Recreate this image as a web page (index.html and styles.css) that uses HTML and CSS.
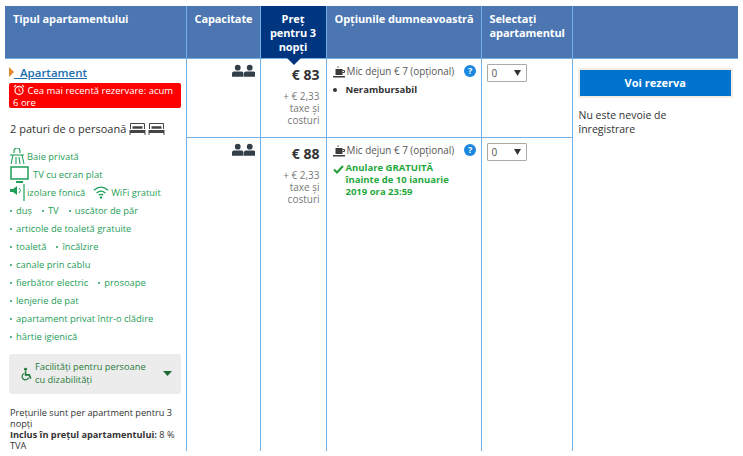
FILE: index.html
```html
<!DOCTYPE html>
<html lang="ro">
<head>
<meta charset="utf-8">
<title>Apartament</title>
<link rel="stylesheet" href="styles.css">
</head>
<body>
<table class="rooms">
<colgroup><col class="c1"><col class="c2"><col class="c3"><col class="c4"><col class="c5"><col class="c6"></colgroup>
<thead>
<tr>
<th>Tipul apartamentului</th>
<th>Capacitate</th>
<th class="th-price">Preţ pentru 3 nopţi<svg class="notch" width="14" height="7" viewBox="0 0 14 7"><path d="M0 0h14L7 7z" fill="#003580"/></svg></th>
<th class="nowrap">Opțiunile dumneavoastră</th>
<th>Selectaţi apartamentul</th>
<th></th>
</tr>
</thead>
<tbody>
<tr class="row1">
<td rowspan="2" class="room">
<div class="title"><svg class="arrow" width="5" height="10" viewBox="0 0 5 10"><path d="M0 0l5 5-5 5z" fill="#e08a2c"/></svg><a href="#">&nbsp;&nbsp;Apartament</a></div>
<div class="urgent"><svg class="clock" width="12" height="12" viewBox="0 0 12 12"><circle cx="6" cy="6.500" r="4" fill="none" stroke="#ffd9d0" stroke-width="1.400"/><path d="M6 4.500v2.200l1.500.8" fill="none" stroke="#ffd9d0"/><path d="M1 3l2-2M11 3L9 1" stroke="#ffd9d0" stroke-width="1.300"/></svg> Cea mai recentă rezervare: acum 6 ore</div>
<div class="beds">2 paturi de o persoană <svg width="37" height="13" viewBox="0 0 37 13"><g id="b" fill="none" stroke="#444"><path d="M1.500 7V1.500h14V7"/><path d="M.5 9.500h16" stroke-width="3"/><path d="M3.500 5.500h10" stroke-width="2.500"/><path d="M1 11v2M16 11v2"/></g><use href="#b" x="19"/></svg></div>
<div class="facility"><svg class="ic-bath" width="15" height="17" viewBox="0 0 15 17"><g fill="none" stroke="#1f9e5a" stroke-width="1.100"><path d="M4 5V3a3 3 0 0 1 6 0v2"/><path d="M0 7h14"/><path d="M3 7L1 16M6 9v7M9 9l1 7M12 7l2 9"/></g></svg> Baie privată</div>
<div class="facility"><svg width="21" height="17" viewBox="0 0 21 17"><path d="M1 1h17v12H1z" fill="none" stroke="#1f9e5a" stroke-width="1.500"/><path d="M6 16h7" stroke="#1f9e5a" stroke-width="2"/></svg> TV cu ecran plat</div>
<div class="facility"><svg width="15" height="17" viewBox="0 0 15 17"><path d="M0 5h3l4-3v9L3 8H0z" fill="#1f9e5a"/><path d="M9 4l1.500 2.500L9 9" fill="none" stroke="#1f9e5a"/><path d="M14 0v17" stroke="#1f9e5a" stroke-width="1.200"/></svg> izolare fonică <svg class="wifi" width="16" height="15" viewBox="0 0 18 15"><g fill="none" stroke="#1f9e5a" stroke-width="1.500"><path d="M1 5c5-4.500 11-4.500 16 0"/><path d="M4 8c3-2.500 7-2.500 10 0"/><path d="M6.500 10.500c1.500-1 3.500-1 5 0"/></g><circle cx="9" cy="13" r="1.400" fill="#1f9e5a"/></svg> WiFi gratuit</div>
<div class="facility small"><span>duş</span><span>TV</span><span>uscător de păr</span></div>
<div class="facility small"><span>articole de toaletă gratuite</span></div>
<div class="facility small"><span>toaletă</span><span>încălzire</span></div>
<div class="facility small"><span>canale prin cablu</span></div>
<div class="facility small"><span>fierbător electric</span><span>prosoape</span></div>
<div class="facility small"><span>lenjerie de pat</span></div>
<div class="facility small"><span>apartament privat într-o clădire</span></div>
<div class="facility small"><span>hârtie igienică</span></div>
<div class="access"><svg class="wheel" width="13" height="14" viewBox="0 0 14 14"><circle cx="6" cy="1.800" r="1.600" fill="#1f7a3a"/><path d="M6 4v4h4l1.500 4" fill="none" stroke="#1f7a3a" stroke-width="1.800"/><path d="M4.200 6.500a3.600 3.600 0 1 0 5 4.500" fill="none" stroke="#1f7a3a" stroke-width="1.300"/></svg><span class="access-text">Facilităţi pentru persoane cu dizabilităţi</span><svg width="9" height="5" viewBox="0 0 9 5"><path d="M0 0h9L4.500 5z" fill="#1a6b2f"/></svg></div>
<p class="note">Preţurile sunt per apartment pentru 3 nopţi<br><b>Inclus în preţul apartamentului:</b> 8 % TVA</p>
</td>
<td class="cap"><svg width="23" height="13" viewBox="0 0 24 13"><g id="p" fill="#333f48"><circle cx="6" cy="3.500" r="3"/><path d="M0 13V9.500Q0 7.500 2 7.500h8Q12 7.500 12 9.500V13z"/></g><use href="#p" x="12.500"/></svg></td>
<td class="price"><div class="amount">€ 83</div><div class="tax">+ € 2,33 taxe şi costuri</div></td>
<td class="opt">
<div class="meal"><svg class="cup" width="12" height="13" viewBox="0 0 12 13"><path d="M2.500 4h7v6h-7z" fill="#3b3b3b"/><path d="M9.500 5.500h2v2h-2" fill="none" stroke="#3b3b3b"/><path d="M0 11h12v1.500H0z" fill="#3b3b3b"/><path d="M5 1v2" stroke="#8a6a45"/></svg><span>Mic dejun € 7 (opțional)</span><i class="help">?</i></div>
<div class="cond"><span class="dot"></span><b>Nerambursabil</b></div>
</td>
<td class="sel"><div class="select"><span>0</span><svg width="7" height="6" viewBox="0 0 7 6"><path d="M0 0h7L3.500 6z" fill="#333"/></svg></div></td>
<td rowspan="2" class="book">
<a class="btn" href="#">Voi rezerva</a>
<p>Nu este nevoie de înregistrare</p>
</td>
</tr>
<tr class="row2">
<td class="cap"><svg width="23" height="13" viewBox="0 0 24 13"><use href="#p"/><use href="#p" x="12.500"/></svg></td>
<td class="price"><div class="amount">€ 88</div><div class="tax">+ € 2,33 taxe şi costuri</div></td>
<td class="opt">
<div class="meal"><svg class="cup" width="12" height="13" viewBox="0 0 12 13"><path d="M2.500 4h7v6h-7z" fill="#3b3b3b"/><path d="M9.500 5.500h2v2h-2" fill="none" stroke="#3b3b3b"/><path d="M0 11h12v1.500H0z" fill="#3b3b3b"/><path d="M5 1v2" stroke="#8a6a45"/></svg><span>Mic dejun € 7 (opțional)</span><i class="help">?</i></div>
<div class="cond free"><svg class="check" width="11" height="9" viewBox="0 0 11 9"><path d="M1 4.500l3 3L10 1" fill="none" stroke="#1f9e3a" stroke-width="2"/></svg><b>Anulare GRATUITĂ înainte de 10 ianuarie 2019 ora 23:59</b></div>
</td>
<td class="sel"><div class="select"><span>0</span><svg width="7" height="6" viewBox="0 0 7 6"><path d="M0 0h7L3.500 6z" fill="#333"/></svg></div></td>
</tr>
</tbody>
</table>
</body>
</html>
```
FILE: styles.css
```css
html, body { margin: 0; padding: 0; background: #fff; overflow: hidden; }
body { height: 456px; padding: 6px 0 0 5px; box-sizing: border-box; font-family: "Open Sans", "Noto Sans", sans-serif; font-size: 10px; color: #333; }
.rooms { border-collapse: collapse; table-layout: fixed; width: 733px; }
.c1 { width: 181px; } .c2 { width: 74px; } .c3 { width: 66px; } .c4 { width: 155px; } .c5 { width: 91px; } .c6 { width: 166px; }
th { background: #4b76b2; color: #fff; font-size: 11px; line-height: 14px; font-weight: 700; letter-spacing: -.1px; height: 52px; text-align: left; vertical-align: top; padding: 6px 8px 0; border-left: 1px solid #74b0e8; border-bottom: 1px solid #74b0e8; box-sizing: border-box; }
th:first-child { border-left: 0; }
th.nowrap { white-space: nowrap; }
th.th-price { background: #003580; text-align: center; position: relative; padding: 6px 6px 0; }
.notch { position: absolute; left: 26px; top: 100%; }
td { vertical-align: top; border-left: 1px solid #74b0e8; padding: 0; box-sizing: border-box; }
td.room { border-left: 0; }
.row1 td { height: 79px; }
.row1 .cap, .row1 .price, .row1 .opt, .row1 .sel { border-bottom: 1px solid #74b0e8; }
.room { padding: 6px 5px 0 4px; height: 398px; }
.title { display: flex; align-items: center; font-size: 11.500px; line-height: 15px; font-weight: 600; }
.title a { color: #1a6fb0; }
.urgent { background: #fe0000; color: #fff; font-size: 9.500px; line-height: 12px; padding: 1px 4px 0; border-radius: 2px; margin: 3px 0 0; height: 25px; box-sizing: border-box; }
.clock { vertical-align: -2px; }
.beds { font-size: 11px; line-height: 14px; margin: 14px 0 12px 1px; display: flex; align-items: center; gap: 3px; }
.facility { color: #1f9e5a; font-size: 9.400px; line-height: 18px; margin-left: 1px; white-space: nowrap; display: flex; align-items: center; gap: 2px; }
.facility .wifi { margin-left: 6px; }
.small { gap: 10px; }
.small span::before { content: ""; display: inline-block; width: 2px; height: 2px; background: #1f9e5a; border-radius: 50%; margin: 0 4px 2px 0; }
.access { background: #ececec; margin: 8px 0 0; height: 40px; border-radius: 3px; display: flex; align-items: center; padding: 0 9px 0 11px; color: #1f7a3a; font-size: 9.300px; line-height: 13px; box-sizing: border-box; }
.wheel { flex: none; margin-right: 2px; }
.access-text { flex: 1; margin-top: -2px; padding-right: 12px; }
.note { margin: 13px 0 0 1px; font-size: 9.200px; line-height: 11px; }
.cap { text-align: right; padding: 5px 5px 0 0; }
.price { text-align: right; padding: 7px 6px 0 0; }
.amount { font-size: 14px; line-height: 17px; font-weight: 700; margin-bottom: 7px; }
.tax { color: #777; font-size: 10px; line-height: 12px; padding-left: 18px; }
.opt { padding: 6px 0 0 6px; }
.meal { display: flex; align-items: center; font-size: 9.900px; line-height: 12px; color: #555; white-space: nowrap; }
.cup { margin-right: 2px; flex: none; }
.help { width: 12px; height: 12px; border-radius: 50%; background: #1b87e0; color: #fff; font-size: 9px; line-height: 12px; font-style: normal; font-weight: 700; text-align: center; margin-left: 10px; flex: none; }
.cond { position: relative; padding: 0 24px 0 13px; font-size: 9.500px; line-height: 12px; margin-top: 6px; color: #333; }
.free { color: #1fa83c; margin-top: 5px; }
.dot { position: absolute; left: 0; top: 4px; width: 4px; height: 4px; background: #333; border-radius: 50%; }
.check { position: absolute; left: 0; top: 3px; }
.sel { padding: 5px 0 0 5px; }
.select { width: 40px; height: 18px; border: 1px solid #aaa; border-radius: 1px; box-sizing: border-box; display: flex; align-items: center; justify-content: space-between; padding: 0 5px 0 4px; font-size: 10px; color: #555; background: #fff; }
.book { padding: 11px 7px 0 7px; }
.btn { display: block; height: 26px; background: #0073cf; color: #fff; text-decoration: none; font-size: 11px; font-weight: 700; line-height: 26px; text-align: center; box-shadow: 0 0 0 2px #f3ede4; }
.book p { margin: 12px 40px 0 -1px; font-size: 10.500px; line-height: 14px; }
```
